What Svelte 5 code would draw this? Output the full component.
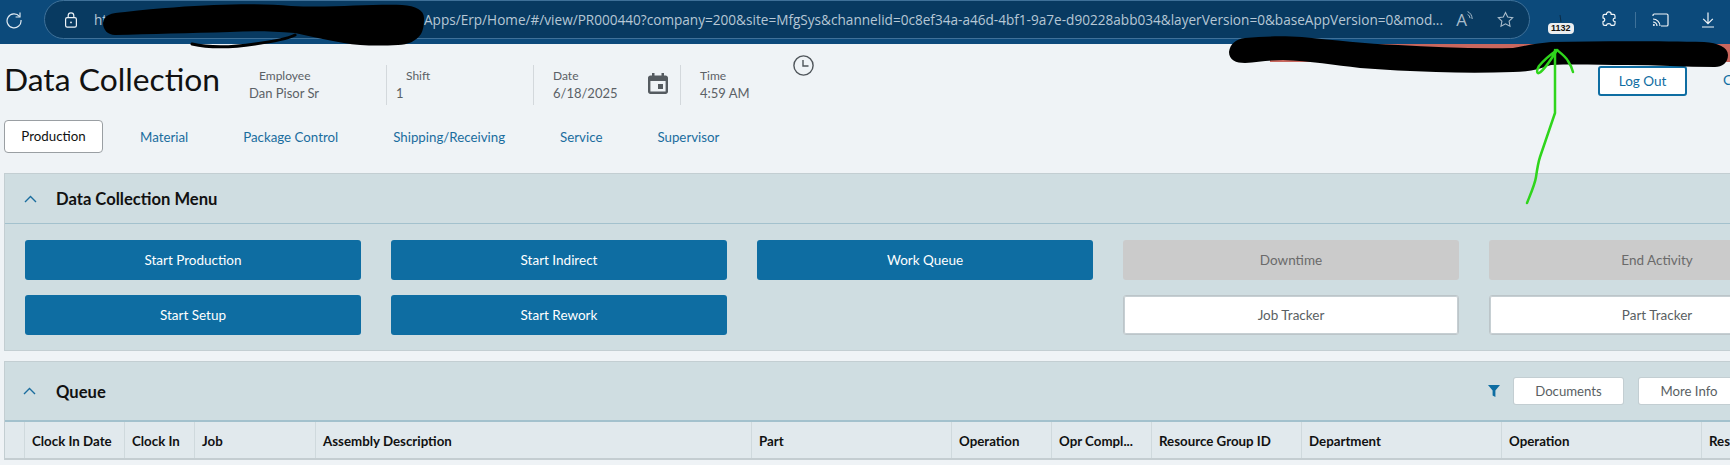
<script>
  const tabs = ['Production', 'Material', 'Package Control', 'Shipping/Receiving', 'Service', 'Supervisor']

  const menuButtons = [
    { label: 'Start Production', kind: 'primary' },
    { label: 'Start Indirect', kind: 'primary' },
    { label: 'Work Queue', kind: 'primary' },
    { label: 'Downtime', kind: 'disabled' },
    { label: 'End Activity', kind: 'disabled' },
    { label: 'Start Setup', kind: 'primary' },
    { label: 'Start Rework', kind: 'primary' },
    { label: '', kind: 'empty' },
    { label: 'Job Tracker', kind: 'plain' },
    { label: 'Part Tracker', kind: 'plain' }
  ]

  const columns = [
    { label: '', width: 20 },
    { label: 'Clock In Date', width: 100 },
    { label: 'Clock In', width: 70 },
    { label: 'Job', width: 121 },
    { label: 'Assembly Description', width: 436 },
    { label: 'Part', width: 200 },
    { label: 'Operation', width: 100 },
    { label: 'Opr Compl...', width: 100 },
    { label: 'Resource Group ID', width: 150 },
    { label: 'Department', width: 200 },
    { label: 'Operation', width: 200 },
    { label: 'Res', width: 120 }
  ]
</script>

<div class="page">
  <div class="browser">
    <svg class="reload" width="18" height="18" viewBox="0 0 18 18" fill="none" stroke="#dfe9f1" stroke-width="1.2">
      <path d="M14.6 5.6A7 7 0 1 0 16 9" />
      <path d="M15 1.6v4.4h-4.4" />
    </svg>
    <div class="address">
      <svg class="lock" width="14" height="16" viewBox="0 0 14 16" fill="none" stroke="#eef3f7" stroke-width="1.2">
        <rect x="1.6" y="5.6" width="10.8" height="9.6" rx="1.6" />
        <path d="M4.2 5.6V3.6a2.8 2.8 0 0 1 5.6 0v2" />
        <circle cx="7" cy="10.4" r="0.9" fill="#eef3f7" stroke="none" />
      </svg>
      <span class="url-start">ht</span>
      <span class="url">Apps/Erp/Home/#/view/PR000440?company=200&amp;site=MfgSys&amp;channelid=0c8ef34a-a46d-4bf1-9a7e-d90228abb034&amp;layerVersion=0&amp;baseAppVersion=0&amp;mod...</span>
      <span class="read-aloud">
        A<svg width="6" height="10" viewBox="0 0 6 10" fill="none" stroke="#a9bccb" stroke-width="1">
          <path d="M0.6 0.6c2.6 1.2 4.4 3.6 4.6 7.4" />
          <path d="M0.6 3.4c1.4 0.8 2.2 2 2.4 3.8" />
        </svg>
      </span>
      <svg class="star" width="17" height="17" viewBox="0 0 17 17" fill="none" stroke="#a9bccb" stroke-width="1.1">
        <path d="M8.5 1.4l2.2 4.6 5 .7-3.6 3.500.9 5-4.500-2.400L4 15.200l.9-5L1.300 6.700l5-.7z" />
      </svg>
    </div>
    <div class="badge-slot">
      <span class="badge">1132</span>
    </div>
    <svg class="puzzle" width="16" height="17" viewBox="0 0 16 17" fill="none" stroke="#f2f6f9" stroke-width="1.2">
      <path d="M5.4 3.4c0-1.4 1-2.6 2.4-2.6s2.4 1.2 2.4 2.6h2.2c.9 0 1.6.7 1.6 1.6v2.2c-1.2.1-1.9.8-1.9 1.7s.7 1.6 1.9 1.7v2.2c0 .9-.7 1.6-1.6 1.6h-2.2c-.2-1.2-1.100-1.800-2.400-1.800s-2.200.6-2.400 1.800h-1.800c-.9 0-1.600-.7-1.600-1.600v-2.100c1.200-.2 1.800-1 1.800-1.900s-.6-1.700-1.800-1.900v-2.100c0-.9.7-1.500 1.600-1.500z" />
    </svg>
    <span class="sep"></span>
    <svg class="cast" width="17" height="14" viewBox="0 0 17 14" fill="none" stroke="#f2f6f9" stroke-width="1.2">
      <path d="M1 3V2.300c0-.7.5-1.300 1.300-1.300h12.400c.7 0 1.300.6 1.300 1.300v9.400c0 .7-.6 1.300-1.300 1.300H9" />
      <path d="M1 6a7 7 0 0 1 7 7M1 9a4 4 0 0 1 4 4" />
      <circle cx="1.900" cy="12.100" r="1" fill="#f2f6f9" stroke="none" />
    </svg>
    <svg class="download" width="14" height="16" viewBox="0 0 14 16" fill="none" stroke="#f2f6f9" stroke-width="1.2">
      <path d="M7 0.500v11M2.200 6.800L7 11.600l4.800-4.800M1 15h12" />
    </svg>
  </div>

  <header class="head">
    <h1>Data Collection</h1>
    <div class="field employee">
      <span class="label">Employee</span>
      <span class="value">Dan Pisor Sr</span>
    </div>
    <div class="field shift">
      <span class="label">Shift</span>
      <span class="value">1</span>
    </div>
    <div class="field date">
      <div>
        <span class="label">Date</span>
        <span class="value">6/18/2025</span>
      </div>
      <svg width="20" height="21" viewBox="0 0 20 21" fill="#555b60">
        <path d="M4 0h2.500v2.400h7V0H16v2.400h1.600c1.300 0 2.400 1 2.400 2.300v13.900c0 1.300-1.100 2.400-2.400 2.400H2.400C1.100 21 0 19.900 0 18.600V4.700c0-1.300 1.100-2.300 2.400-2.300H4zM2.400 8v10.600h15.200V8z" />
        <rect x="10" y="11" width="5" height="5" />
      </svg>
    </div>
    <div class="field time">
      <span class="label">Time</span>
      <span class="value">4:59 AM</span>
    </div>
    <svg class="clock" width="21" height="21" viewBox="0 0 21 21" fill="none" stroke="#4f555a" stroke-width="1.400">
      <circle cx="10.500" cy="10.500" r="9.600" />
      <path d="M10 5v6h5.500" />
    </svg>
    <button class="logout">Log Out</button>
    <span class="head-link">C</span>
  </header>

  <nav class="tabs">
    {#each tabs as tab, i}
      <span class="tab" class:active={i === 0}>{tab}</span>
    {/each}
  </nav>

  <section class="panel menu-panel">
    <div class="panel-head menu-head">
      <svg class="chevron" width="13" height="8" viewBox="0 0 13 8" fill="none" stroke="#1a6d9e" stroke-width="1.400">
        <path d="M1 7l5.500-5.500L12 7" />
      </svg>
      <h2>Data Collection Menu</h2>
    </div>
    <div class="menu-grid">
      {#each menuButtons as btn}
        {#if btn.kind === 'empty'}
          <span></span>
        {:else}
          <button class="action {btn.kind}">{btn.label}</button>
        {/if}
      {/each}
    </div>
  </section>

  <section class="panel queue-panel">
    <div class="panel-head queue-head">
      <svg class="chevron" width="13" height="8" viewBox="0 0 13 8" fill="none" stroke="#1a6d9e" stroke-width="1.400">
        <path d="M1 7l5.500-5.500L12 7" />
      </svg>
      <h2>Queue</h2>
      <svg class="filter" width="12" height="12" viewBox="0 0 12 12" fill="#0e6da2">
        <path d="M0 0h12L7.400 5.600V12L4.600 10.400V5.600z" />
      </svg>
      <button class="queue-btn">Documents</button>
      <button class="queue-btn">More Info</button>
    </div>
    <div class="table-head">
      {#each columns as col}
        <span class="cell" style="width: {col.width}px">{col.label}</span>
      {/each}
    </div>
  </section>

  <!-- marker drawn over the screenshot -->
  <svg class="markup" width="1730" height="465" viewBox="0 0 1730 465">
    <rect x="1270" y="44" width="460" height="18" fill="#c9675e" />
    <path
      fill="#000"
      d="M103 23C104 15 110 13 125 12C160 8 190 6 214 5C245 4 270 4 291 6C330 8 370 4 402 5C416 6 424 10 424 18C424 26 423 30 421 34C416 41 408 45 398 45C380 46 360 46 344 43C325 40 310 36 295 33C270 31 250 31 230 32C190 33 150 34 115 35C108 35 103 30 103 23Z"
    />
    <path fill="none" stroke="#000" stroke-width="3" stroke-linecap="round" d="M192 44C210 48 235 47 255 44C270 42 285 40 295 35" />
    <path
      fill="#000"
      d="M1229 52C1230 44 1236 39 1245 38C1265 36 1285 36 1302 37C1335 40 1365 44 1398 45C1435 47 1475 49 1513 48C1528 45 1540 43 1551 42C1600 41 1660 41 1704 42C1718 43 1728 47 1728 55C1728 63 1722 67 1715 67C1685 67 1655 65 1627 65C1600 65 1575 64 1551 65C1540 69 1528 72 1513 72C1487 73 1462 73 1436 72C1410 71 1385 70 1360 68C1335 65 1310 61 1283 60C1270 60 1258 62 1245 63C1236 63 1229 60 1229 52Z"
    />
    <g fill="none" stroke="#2fd51c" stroke-width="2.500" stroke-linecap="round" stroke-linejoin="round">
      <path d="M1527 203C1531 193 1535 184 1536 177C1537 170 1538 163 1540 157C1545 142 1550 128 1555 113L1555 50" />
      <path d="M1557 50C1550 55 1543 61 1539 66C1536 71 1537 74 1539 73C1543 71 1552 58 1557 50Z" />
      <path d="M1557 50C1562 54 1566 57 1568 61C1570 64 1572 68 1573 72" />
    </g>
    <path stroke="#0a2c47" stroke-width="1" d="M1560 15L1561 22" />
  </svg>
</div>

<style>
  :global(body) {
    margin: 0;
    overflow: hidden;
  }

  .page {
    position: relative;
    width: 1730px;
    height: 465px;
    overflow: hidden;
    background: #eff3f6;
    color: #111;
    font-family: Lato, 'Noto Sans', sans-serif;
    font-size: 14px;
  }

  /* browser chrome */
  .browser {
    display: flex;
    align-items: center;
    height: 44px;
    padding-left: 5px;
    box-sizing: border-box;
    background: #0c4a7b;
  }
  .reload {
    flex: none;
    margin-bottom: 4px;
  }
  .address {
    display: flex;
    align-items: center;
    flex: none;
    box-sizing: border-box;
    width: 1486px;
    height: 39px;
    margin: 0 0 5px 21px;
    padding: 0 15px 0 19px;
    border: 1px solid #3f7199;
    border-radius: 20px;
    background: #083a61;
    color: #b6c7d5;
    font-family: 'Open Sans', sans-serif;
    font-size: 13.600px;
    white-space: nowrap;
  }
  .lock {
    flex: none;
  }
  .url-start {
    flex: none;
    margin-left: 16px;
    width: 330px;
  }
  .url {
    flex: none;
    width: 1020px;
    overflow: hidden;
  }
  .read-aloud {
    display: flex;
    align-items: flex-start;
    margin-left: auto;
    font-size: 17px;
    line-height: 18px;
    color: #a9bccb;
  }
  .star {
    flex: none;
    margin-left: 24px;
  }
  .badge-slot {
    flex: none;
    width: 44px;
    margin-left: 18px;
    height: 44px;
    display: flex;
    align-items: flex-start;
  }
  .badge {
    margin-top: 23px;
    padding: 0 3px;
    height: 11px;
    border-radius: 4px;
    background: #eceef0;
    color: #111;
    font-family: 'Liberation Sans', sans-serif;
    font-size: 9px;
    font-weight: 700;
    line-height: 11px;
  }
  .puzzle {
    flex: none;
    margin: 0 0 5px 9px;
  }
  .sep {
    flex: none;
    width: 1px;
    height: 16px;
    margin: 0 16px 4px 18px;
    background: #3f7199;
  }
  .cast {
    flex: none;
    margin-bottom: 4px;
  }
  .download {
    flex: none;
    margin: 0 0 4px 32px;
  }

  /* page header */
  .head {
    display: flex;
    height: 71px;
    padding-left: 4px;
    white-space: nowrap;
  }
  h1 {
    flex: none;
    width: 245px;
    margin: 0;
    padding-top: 15px;
    font-size: 31.800px;
    font-weight: 400;
    line-height: 40px;
  }
  .field {
    flex: none;
    box-sizing: border-box;
    height: 40px;
    margin-top: 21px;
    color: #5b6166;
  }
  .label,
  .value {
    display: block;
  }
  .label {
    padding-top: 3px;
    font-size: 12px;
    line-height: 16px;
  }
  .value {
    font-size: 13px;
    line-height: 18px;
  }
  .employee {
    width: 138px;
    border-right: 1px solid #d3d8dc;
  }
  .employee .label,
  .shift .label {
    padding-left: 10px;
  }
  .shift {
    width: 147px;
    padding-left: 9px;
    border-right: 1px solid #d3d8dc;
  }
  .date {
    display: flex;
    width: 147px;
    padding-left: 19px;
    border-right: 1px solid #d3d8dc;
  }
  .date div {
    width: 95px;
  }
  .date svg {
    flex: none;
    margin-top: 8px;
  }
  .time {
    width: 112px;
    padding-left: 19px;
  }
  .clock {
    flex: none;
    margin-top: 11px;
  }
  .logout {
    flex: none;
    box-sizing: border-box;
    width: 89px;
    height: 30px;
    margin: 22px 0 0 784px;
    padding: 0;
    border: 2px solid #0e6da2;
    border-radius: 3px;
    background: #fff;
    color: #0e6da2;
    font: inherit;
    font-size: 13.500px;
  }
  .head-link {
    margin: 27px 0 0 36px;
    color: #0e6da2;
  }

  /* tabs */
  .tabs {
    display: flex;
    align-items: center;
    height: 33px;
    margin: 5px 0 20px 4px;
    font-size: 13.300px;
    color: #1a6d9e;
  }
  .tab {
    margin-right: 55px;
    white-space: nowrap;
  }
  .tab.active {
    box-sizing: border-box;
    width: 99px;
    height: 33px;
    margin-right: 37px;
    border: 1px solid #9a9fa3;
    border-radius: 4px;
    background: #fff;
    color: #111;
    line-height: 31px;
    text-align: center;
  }

  /* panels */
  .panel {
    margin-left: 4px;
    width: 1800px;
    box-sizing: border-box;
    background: #cfdde1;
    border-top: 1px solid #c3ced2;
    border-left: 1px solid #c3ced2;
  }
  .panel-head {
    display: flex;
    align-items: center;
    border-bottom: 1px solid #a3c1cd;
  }
  h2 {
    margin: 0;
    font-size: 16.600px;
    font-weight: 700;
  }
  .chevron {
    flex: none;
  }
  .menu-panel {
    height: 178px;
    border-bottom: 1px solid #c3ced2;
  }
  .menu-head {
    height: 49px;
    padding-left: 19px;
  }
  .menu-head h2 {
    margin-left: 19px;
  }
  .menu-grid {
    display: grid;
    grid-template-columns: repeat(5, 336px);
    grid-auto-rows: 40px;
    gap: 15px 30px;
    padding: 16px 0 0 20px;
  }
  .action {
    border: 0;
    border-radius: 3px;
    font: inherit;
    font-size: 13.500px;
    padding: 0;
  }
  .action.primary {
    background: #0e6da2;
    color: #fff;
  }
  .action.disabled {
    background: #cbcbcb;
    color: #6a6a6a;
  }
  .action.plain {
    background: #fff;
    color: #5a5f63;
    border: 1px solid #bcc5c9;
    box-shadow: inset 0 0 0 1px #c6cfd3;
  }

  .queue-panel {
    margin-top: 10px;
  }
  .queue-head {
    height: 58px;
    padding-left: 18px;
    border-bottom: 2px solid #a3c1cd;
  }
  .queue-head h2 {
    flex: none;
    margin-left: 20px;
    padding-top: 2px;
    width: 1432px;
  }
  .filter {
    flex: none;
    margin-right: 14px;
  }
  .queue-btn {
    flex: none;
    box-sizing: border-box;
    width: 109px;
    height: 26px;
    margin-right: 16px;
    padding: 0;
    border: 0;
    border-radius: 2px;
    background: #fff;
    box-shadow: 0 0 0 1px #c3ced2;
    color: #5a5f63;
    font: inherit;
    font-size: 13.200px;
  }
  .queue-btn:last-child {
    width: 100px;
  }
  .table-head {
    display: flex;
    height: 36px;
    background: #e1e9ed;
    border-bottom: 2px solid #c4cdd1;
  }
  .cell {
    flex: none;
    box-sizing: border-box;
    padding-left: 7px;
    border-right: 1px solid #cfd9dd;
    font-size: 13.300px;
    font-weight: 700;
    line-height: 38px;
    white-space: nowrap;
    overflow: hidden;
  }

  /* annotation layer over the screenshot */
  .markup {
    position: absolute;
    top: 0;
    left: 0;
    pointer-events: none;
  }
</style>
